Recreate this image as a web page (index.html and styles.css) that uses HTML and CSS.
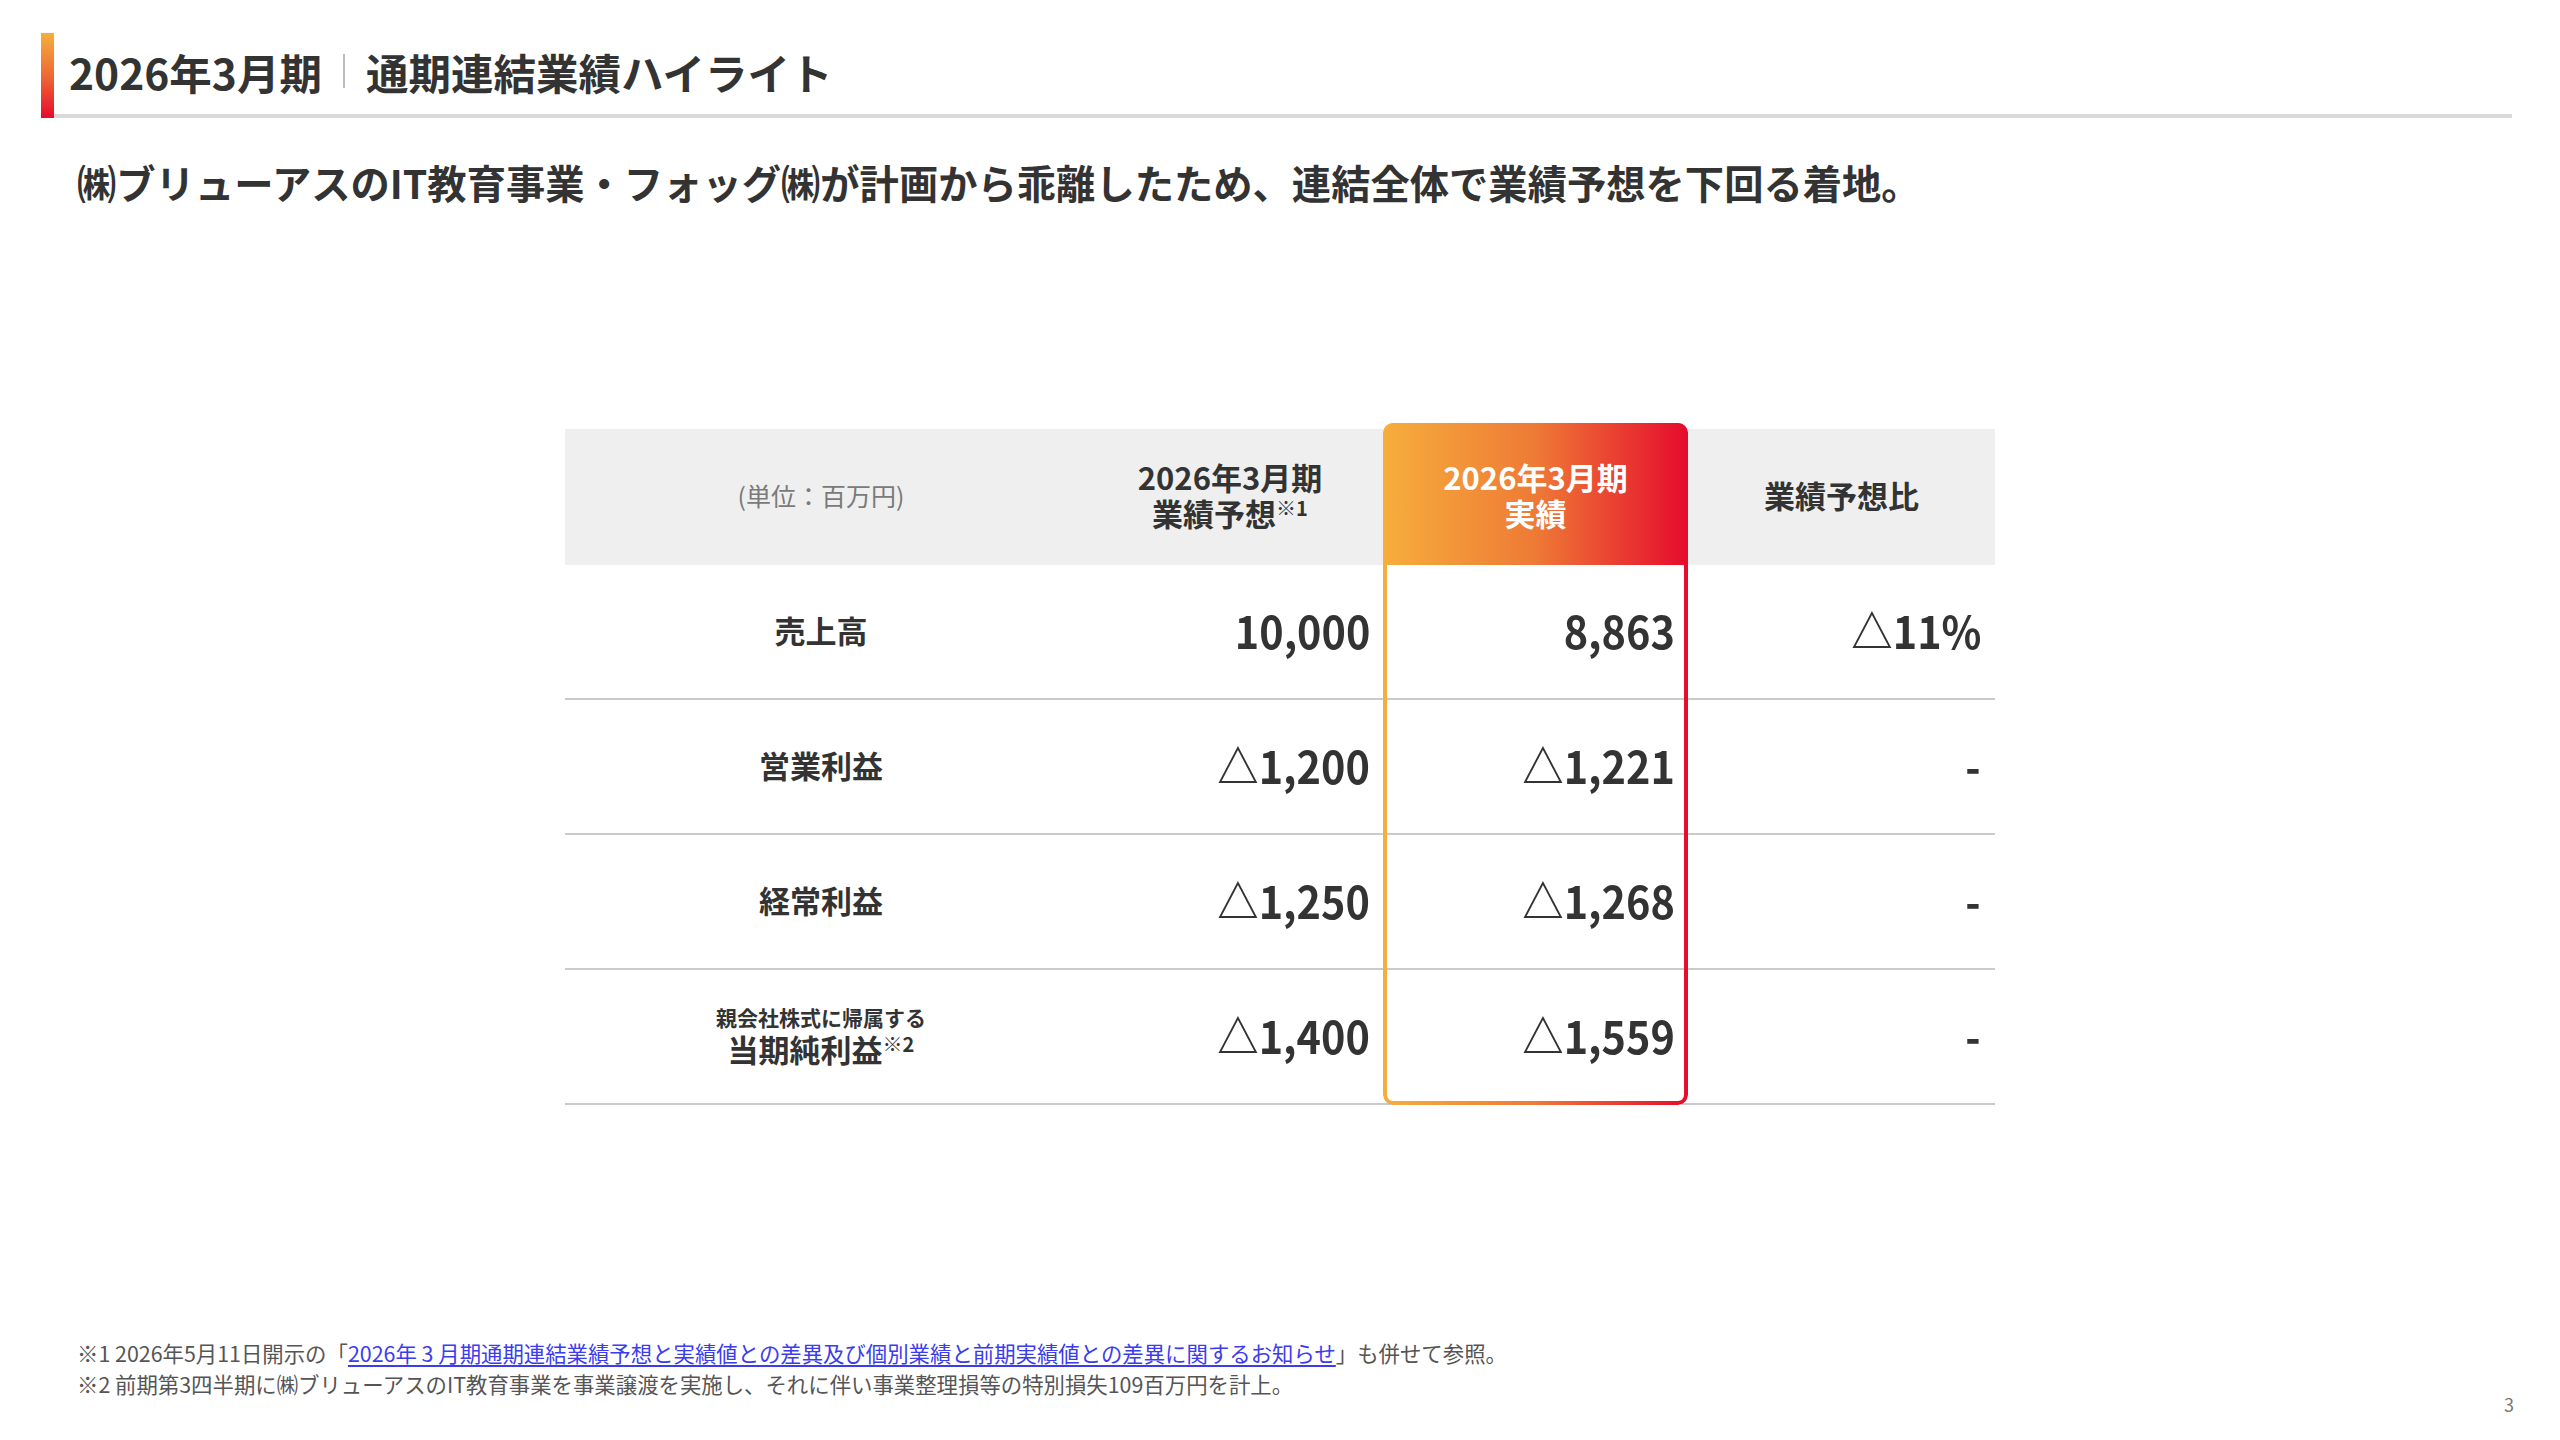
FILE: index.html
```html
<!DOCTYPE html>
<html lang="ja">
<head>
<meta charset="utf-8">
<title>2026年3月期 通期連結業績ハイライト</title>
<link rel="stylesheet" href="styles.css">
</head>
<body>
<div class="slide">
  <header class="head">
    <div class="accent"></div>
    <h1 class="title"><span>2026年3月期</span><span class="sep"></span><span>通期連結業績ハイライト</span></h1>
  </header>

  <p class="lead">㈱ブリューアスのIT教育事業・フォッグ㈱が計画から乖離したため、連結全体で業績予想を下回る着地。</p>

  <section class="table">
    <div class="cell h unit"><span>(単位：百万円)</span></div>
    <div class="cell h"><span>2026年3月期<br>業績予想<sup>※1</sup></span></div>
    <div class="cell h hl"><span>2026年3月期<br>実績</span></div>
    <div class="cell h"><span>業績予想比</span></div>

    <div class="cell label"><span>売上高</span></div>
    <div class="cell num"><span class="v">10,000</span></div>
    <div class="cell num"><span class="v">8,863</span></div>
    <div class="cell num last"><span class="v">△11%</span></div>

    <div class="cell label"><span>営業利益</span></div>
    <div class="cell num"><span class="v">△1,200</span></div>
    <div class="cell num"><span class="v">△1,221</span></div>
    <div class="cell num last"><span class="v">-</span></div>

    <div class="cell label"><span>経常利益</span></div>
    <div class="cell num"><span class="v">△1,250</span></div>
    <div class="cell num"><span class="v">△1,268</span></div>
    <div class="cell num last"><span class="v">-</span></div>

    <div class="cell label two"><span class="small">親会社株式に帰属する</span><span class="big">当期純利益<sup>※2</sup></span></div>
    <div class="cell num"><span class="v">△1,400</span></div>
    <div class="cell num"><span class="v">△1,559</span></div>
    <div class="cell num last"><span class="v">-</span></div>

    <div class="frame"></div>
  </section>

  <footer class="foot">
    <div class="notes">
      <p>※1 2026年5月11日開示の「<a class="link">2026年 3 月期通期連結業績予想と実績値との差異及び個別業績と前期実績値との差異に関するお知らせ</a>」も併せて参照。</p>
      <p>※2 前期第3四半期に㈱ブリューアスのIT教育事業を事業譲渡を実施し、それに伴い事業整理損等の特別損失109百万円を計上。</p>
    </div>
    <div class="page">3</div>
  </footer>
</div>
</body>
</html>
```

FILE: styles.css
```css
* { box-sizing: border-box; margin: 0; padding: 0; }
html, body { width: 2560px; height: 1440px; background: #fff; }
body {
  font-family: "Noto Sans CJK JP", "Noto Sans", sans-serif;
  color: #333;
  overflow: hidden;
}
.slide {
  width: 2560px;
  height: 1440px;
  display: flex;
  flex-direction: column;
  padding-top: 33px;
}

/* header */
.head {
  display: flex;
  height: 85px;
  padding-left: 41px;
  padding-right: 48px;
}
.accent {
  width: 13px;
  background: linear-gradient(180deg, #f6ae3c 0%, #ee6a34 50%, #e60b2d 100%);
}
.title {
  flex: 1;
  display: flex;
  align-items: center;
  padding-left: 15px;
  padding-bottom: 5px;
  border-bottom: 4px solid #d9d9d9;
  font-size: 42.5px;
  font-weight: 700;
  line-height: 53px;
  color: #333;
}
.sep {
  display: inline-block;
  width: 2px;
  height: 34px;
  background: #bdbdbd;
  margin: 0 21px;
}

/* lead */
.lead {
  margin: 38px 0 0 77px;
  font-size: 39.3px;
  font-weight: 700;
  line-height: 51px;
  color: #333;
}

/* table */
.table {
  position: relative;
  margin: 222px 0 0 565px;
  width: 1430px;
  display: grid;
  grid-template-columns: 512px 306px 305px 307px;
  grid-template-rows: 136px repeat(4, 135px);
}
.cell {
  display: flex;
  align-items: center;
  justify-content: flex-end;
  padding-right: 13px;
  padding-bottom: 4px;
  border-bottom: 2px solid #cacaca;
  font-size: 45px;
  font-weight: 700;
  line-height: 1;
  color: #333;
}
.cell .v {
  display: inline-block;
  transform: scaleX(0.92);
  transform-origin: right center;
}
.cell.last { padding-right: 14px; }
.cell.h {
  background: #efefef;
  border-bottom: 0;
  justify-content: center;
  text-align: center;
  padding: 0 0 4px;
  font-size: 31px;
  line-height: 36px;
}
.cell.h.unit {
  font-size: 25px;
  font-weight: 400;
  color: #7a7a7a;
}
.cell.h.hl {
  margin-top: -6px;
  padding-top: 6px;
  background: linear-gradient(90deg, #f6ae3c 0%, #ee7a36 50%, #e60b2d 100%);
  color: #fff;
  border-radius: 10px 10px 0 0;
}
.cell.label {
  justify-content: center;
  padding: 0 0 4px;
  font-size: 31px;
  line-height: 36px;
}
.cell.two {
  flex-direction: column;
}
.cell.two .small {
  font-size: 21px;
  line-height: 27px;
}
.cell.two .big {
  font-size: 31px;
  line-height: 35px;
}
sup {
  font-size: 20px;
  line-height: 0;
  vertical-align: 10px;
  font-weight: 700;
}

.frame {
  position: absolute;
  top: -6px;
  left: 818px;
  width: 305px;
  height: 682px;
  border-radius: 10px;
  padding: 4px;
  background: linear-gradient(90deg, #f6ae3c 0%, #ee7a36 50%, #e60b2d 100%);
  -webkit-mask: linear-gradient(#000 0 0) content-box, linear-gradient(#000 0 0);
  -webkit-mask-composite: xor;
  mask-composite: exclude;
  pointer-events: none;
}

/* footer */
.foot {
  margin-top: auto;
  display: flex;
  justify-content: space-between;
  align-items: flex-end;
  padding: 0 46px 25px 77px;
}
.notes {
  margin-bottom: 16px;
  font-size: 21.4px;
  line-height: 31px;
  color: #555;
}
.link {
  color: #3b3bf0;
  text-decoration: underline;
  text-underline-offset: 3px;
}
.page {
  font-size: 18px;
  line-height: 22px;
  color: #777;
}
```
